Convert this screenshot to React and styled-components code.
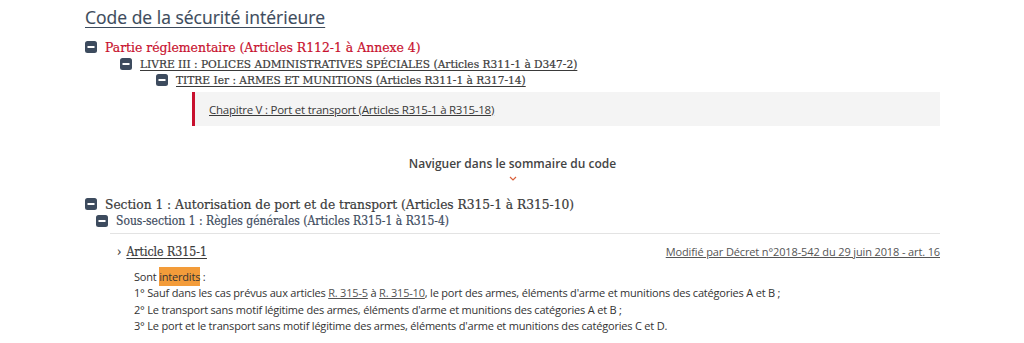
import React from 'react'
import styled, { createGlobalStyle } from 'styled-components'

const Global = createGlobalStyle`
  html, body { margin: 0; padding: 0; background: #fff; }
  body { font-family: "Open Sans", "Noto Sans", sans-serif; }
`;

const Page = styled.div`
  width: 855px;
  padding: 5px 0 0 85px;
`;

const Title = styled.h1`
  margin: 0;
  font-family: "Open Sans", sans-serif;
  font-weight: 400;
  font-size: 17.5px;
  line-height: 24px;
  color: #3d4b5c;
  -webkit-text-stroke: 0.15px #3d4b5c;
  text-decoration: underline;
  text-underline-offset: 3px;
  text-decoration-thickness: 1px;
`;

const Row = styled.div`
  display: flex;
  align-items: center;
  gap: 8px;
  padding-left: ${p => p.indent || 0}px;
  height: 16.5px;
  margin-top: ${p => p.mt || 0}px;
`;

const Label = styled.span`
  font-family: "DejaVu Serif Condensed", "DejaVu Serif", serif;
  font-size: ${p => p.size || 13}px;
  color: ${p => p.color || '#3a3a3a'};
  -webkit-text-stroke: 0.2px ${p => p.color || '#3a3a3a'};
  text-decoration: ${p => (p.link ? 'underline' : 'none')};
  text-underline-offset: 2px;
  white-space: nowrap;
`;

const Toggle = () => (
  <svg width="12" height="12" viewBox="0 0 12 12" style={{ flex: 'none' }}>
    <rect x="0" y="0" width="12" height="12" rx="2.5" fill="#3d4b5e" />
    <rect x="2.5" y="5" width="7" height="2" fill="#fff" />
  </svg>
);

const Chapter = styled.div`
  margin: 3.5px 0 0 107px;
  height: 34px;
  background: #f4f4f4;
  border-left: 3px solid #c8102e;
  display: flex;
  align-items: center;
  padding-left: 14px;
`;

const ChapterLink = styled.a`
  font-size: 11.5px;
  letter-spacing: -0.25px;
  color: #3a3a3a;
  text-decoration: underline;
`;

const Navigate = styled.div`
  margin-top: 30px;
  text-align: center;
  font-size: 12px;
  font-weight: 600;
  color: #444;
  line-height: 16px;
`;

const Chevron = styled.div`
  display: flex;
  justify-content: center;
  margin-top: 4px;
`;

const Divider = styled.div`
  margin: 4px 0 0 25px;
  border-top: 1px solid #e3e3e3;
`;

const ArticleHead = styled.div`
  display: flex;
  justify-content: space-between;
  align-items: center;
  margin-top: 10px;
  padding-left: 32px;
`;

const ArticleTitle = styled.span`
  display: flex;
  align-items: center;
  gap: 5px;
  font-family: "DejaVu Serif Condensed", "DejaVu Serif", serif;
  font-size: 12.2px;
  color: #3a3a3a;
  -webkit-text-stroke: 0.2px #3a3a3a;
  span { text-decoration: underline; text-underline-offset: 2px; }
`;

const Modified = styled.a`
  font-size: 11px;
  letter-spacing: -0.13px;
  color: #555;
  text-decoration: underline;
`;

const Body = styled.div`
  margin: 10px 0 0 49px;
  font-size: 11px;
  letter-spacing: -0.2px;
  line-height: 16.3px;
  color: #333;
  a { color: #555; text-decoration: underline; }
`;

const Mark = styled.mark`
  background: #f39c3a;
  color: #333;
  padding: 2px 0;
`;

export default function App() {
  return (
    <Page>
      <Global />
      <Title>Code de la sécurité intérieure</Title>
      <Row mt={10}>
        <Toggle />
        <Label size={13.8} color="#c8102e">Partie réglementaire (Articles R112-1 à Annexe 4)</Label>
      </Row>
      <Row indent={35}>
        <Toggle />
        <Label size={11.8} link>LIVRE III : POLICES ADMINISTRATIVES SPÉCIALES (Articles R311-1 à D347-2)</Label>
      </Row>
      <Row indent={71}>
        <Toggle />
        <Label size={11.8} link>TITRE Ier : ARMES ET MUNITIONS (Articles R311-1 à R317-14)</Label>
      </Row>
      <Chapter>
        <ChapterLink>Chapitre V : Port et transport (Articles R315-1 à R315-18)</ChapterLink>
      </Chapter>
      <Navigate>Naviguer dans le sommaire du code</Navigate>
      <Chevron>
        <svg width="8" height="5" viewBox="0 0 8 5">
          <path d="M1 1 L4 4 L7 1" fill="none" stroke="#d9603b" strokeWidth="1.2" />
        </svg>
      </Chevron>
      <Row mt={15}>
        <Toggle />
        <Label size={13.6}>Section 1 : Autorisation de port et de transport (Articles R315-1 à R315-10)</Label>
      </Row>
      <Row indent={11}>
        <Toggle />
        <Label size={12} color="#3d4b5e">Sous-section 1 : Règles générales (Articles R315-1 à R315-4)</Label>
      </Row>
      <Divider />
      <ArticleHead>
        <ArticleTitle>›<span>Article R315-1</span></ArticleTitle>
        <Modified>Modifié par Décret n°2018-542 du 29 juin 2018 - art. 16</Modified>
      </ArticleHead>
      <Body>
        <div>Sont <Mark>interdits</Mark> :</div>
        <div>1° Sauf dans les cas prévus aux articles <a>R. 315-5</a> à <a>R. 315-10</a>, le port des armes, éléments d'arme et munitions des catégories A et B ;</div>
        <div>2° Le transport sans motif légitime des armes, éléments d'arme et munitions des catégories A et B ;</div>
        <div>3° Le port et le transport sans motif légitime des armes, éléments d'arme et munitions des catégories C et D.</div>
      </Body>
    </Page>
  );
}
